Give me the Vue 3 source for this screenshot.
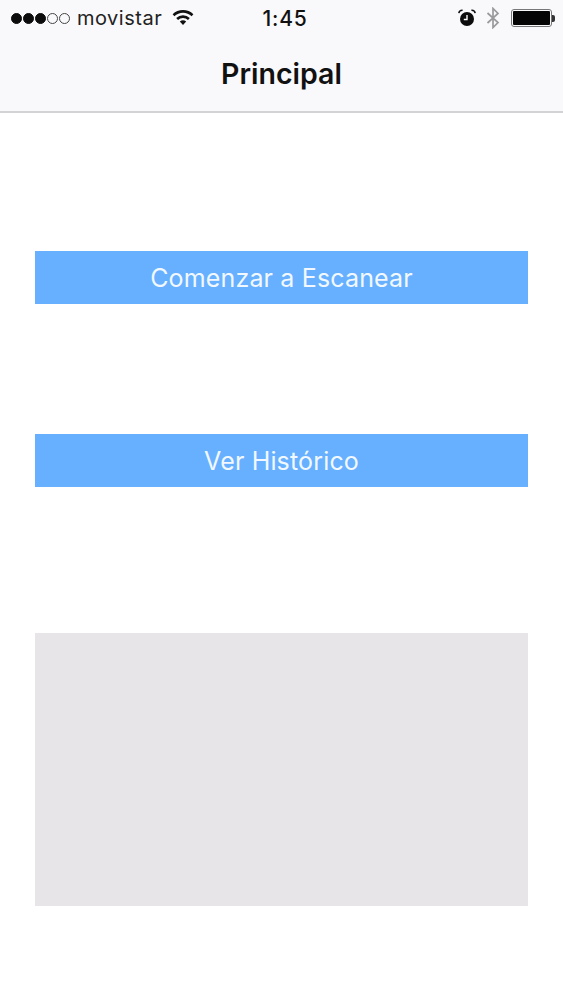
<script setup>
const dots = [true, true, true, false, false]
</script>

<template>
  <div class="page">
    <header class="nav">
      <div class="status">
        <div class="left">
          <span class="dots">
            <i v-for="(on, n) in dots" :key="n" class="dot" :class="{ on }"></i>
          </span>
          <span class="carrier">movistar</span>
          <svg class="wifi" width="22" height="16" viewBox="0 0 22 16">
            <path d="M0.6 5.2A15 15 0 0 1 21.4 5.2L19.6 7.2A12.3 12.3 0 0 0 2.4 7.2Z" fill="#111" />
            <path d="M4.2 9A10 10 0 0 1 17.8 9L16 11A7.3 7.3 0 0 0 6 11Z" fill="#111" />
            <path d="M7.8 12.6A5 5 0 0 1 14.2 12.6L11 16Z" fill="#111" />
          </svg>
        </div>
        <span class="time">1:45</span>
        <div class="right">
          <svg class="alarm" width="18" height="18" viewBox="0 0 18 18">
            <circle cx="9" cy="10" r="7" fill="#0c0c0c" />
            <path d="M9 6V10.5H5.8" stroke="#fff" stroke-width="1.4" fill="none" />
            <path d="M0.8 4.2A3.6 3.6 0 0 1 4.6 1.2M17.2 4.2A3.6 3.6 0 0 0 13.4 1.2" stroke="#0c0c0c" stroke-width="1.5" fill="none" />
          </svg>
          <svg class="bt" width="14" height="22" viewBox="0 0 14 22">
            <path d="M1.5 6L12 15.5L7 20.5V1.5L12 6.5L1.5 16" stroke="#9a9a9c" stroke-width="1.7" fill="none" />
          </svg>
          <div class="battery">
            <div class="cell"><div class="fill"></div></div>
            <div class="nub"></div>
          </div>
        </div>
      </div>
      <h1 class="title">Principal</h1>
    </header>

    <main class="content">
      <button class="action first">Comenzar a Escanear</button>
      <button class="action second">Ver Histórico</button>
      <div class="panel"></div>
    </main>
  </div>
</template>

<style scoped>
.page {
  width: 563px;
  height: 1000px;
  background: #fff;
  font-family: Inter, "Liberation Sans", sans-serif;
  overflow: hidden;
}
.nav {
  height: 113px;
  box-sizing: border-box;
  background: #f9f9fb;
  border-bottom: 2px solid #d3d3d6;
  display: flex;
  flex-direction: column;
}
.status {
  height: 36px;
  position: relative;
  display: flex;
  align-items: center;
  justify-content: space-between;
  padding: 0 9px 0 11px;
}
.left {
  display: flex;
  align-items: center;
}
.dots {
  display: flex;
  gap: 1px;
}
.dot {
  width: 11px;
  height: 11px;
  box-sizing: border-box;
  border-radius: 50%;
  border: 1px solid #444;
}
.dot.on {
  background: #0c0c0c;
  border-color: #0c0c0c;
}
.carrier {
  margin-left: 7px;
  font-size: 20px;
  letter-spacing: 0.5px;
  color: #222;
}
.wifi {
  margin-left: 10px;
  margin-top: -2px;
}
.time {
  position: absolute;
  left: 7px;
  right: 0;
  text-align: center;
  font-size: 21px;
  font-weight: 500;
  color: #111;
  letter-spacing: 0.8px;
}
.right {
  display: flex;
  align-items: center;
  transform: translateX(1px);
}
.bt {
  margin-left: 10px;
}
.battery {
  margin-left: 11px;
  display: flex;
  align-items: center;
}
.cell {
  width: 41px;
  height: 18px;
  box-sizing: border-box;
  border: 1px solid #777;
  border-radius: 3px;
  padding: 1px;
}
.fill {
  height: 100%;
  background: #050505;
  border-radius: 1px;
}
.nub {
  width: 3px;
  height: 7px;
  background: #333;
  border-radius: 0 2px 2px 0;
}
.title {
  margin: 21px 0 0;
  text-align: center;
  font-size: 28.5px;
  line-height: 34px;
  font-weight: 600;
  color: #111;
}
.content {
  padding: 0 35px;
  display: flex;
  flex-direction: column;
}
.action {
  display: block;
  width: 100%;
  height: 53px;
  padding: 0;
  border: none;
  border-radius: 0;
  background: #66b0ff;
  color: #f2f8ff;
  font-family: inherit;
  font-size: 25px;
  letter-spacing: 0.16px;
  font-weight: 400;
}
.first {
  margin-top: 138px;
}
.second {
  margin-top: 130px;
}
.panel {
  margin-top: 146px;
  height: 273px;
  background: #e7e5e8;
}
</style>
